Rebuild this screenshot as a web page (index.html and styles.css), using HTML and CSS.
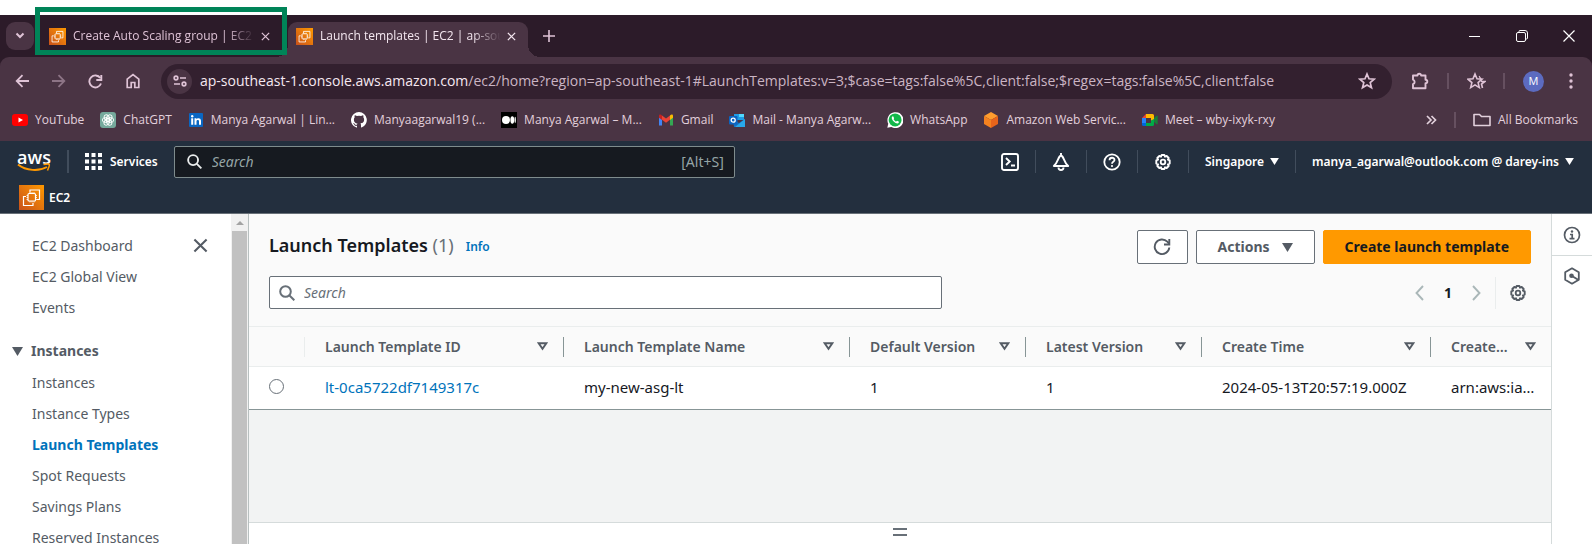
FILE: index.html
```html
<!DOCTYPE html>
<html lang="en">
<head>
<meta charset="utf-8">
<meta name="viewport" content="width=device-width, initial-scale=1">
<title>Launch templates | EC2 | ap-southeast-1</title>
<link rel="stylesheet" href="styles.css">
</head>
<body>
<svg class="sprite" aria-hidden="true">
  <defs>
    <linearGradient id="ec2-fill" x1="0" y1="1" x2="1" y2="0"><stop offset="0" stop-color="#c8511b"/><stop offset="1" stop-color="#ff9900"/></linearGradient>
    <symbol id="ec2" viewBox="0 0 25 25">
      <rect width="25" height="25" fill="url(#ec2-fill)"/>
      <g fill="none" stroke="#fff" stroke-width="1.2">
        <path d="M11 7.500V5h9.500v9.500H18M7 11.500H4.500V20.500H14V18"/>
        <rect x="9" y="8.500" width="7.500" height="7.500" rx="1"/>
        <path d="M11 8.500V7M13 8.500V7M15 8.500V7M11 17.500V16M13 17.500V16M15 17.500V16M9 10.500H7.500M9 12.500H7.500M9 14.500H7.500M18 10.500h-1.500M18 12.500h-1.500M18 14.500h-1.500" stroke-width=".8"/>
      </g>
    </symbol>
    <symbol id="close" viewBox="0 0 16 16"><path d="M1.500 1.500l13 13M14.500 1.500l-13 13" fill="none" stroke="currentColor" stroke-width="2.200"/></symbol>
    <symbol id="search" viewBox="0 0 16 16"><circle cx="6.500" cy="6.500" r="5.300" fill="none" stroke="currentColor" stroke-width="2"/><path d="M10.500 10.500l4.800 4.800" stroke="currentColor" stroke-width="2"/></symbol>
    <symbol id="caret" viewBox="0 0 10 8"><path d="M0 0h10L5 8z" fill="currentColor"/></symbol>
    <symbol id="sort" viewBox="0 0 10 8"><path d="M1.500 1h7L5 6z" fill="none" stroke="currentColor" stroke-width="1.800"/></symbol>
    <symbol id="gear" viewBox="0 0 18 18"><path d="M7.600 1.500h2.800l.6 1.700 1.700-.7 2 2-.8 1.700 1.800.7v3.200l-1.800.7.8 1.700-2 2-1.700-.7-.6 1.700H7.600L7 13.800l-1.700.7-2-2 .8-1.700-1.800-.7V6.900l1.800-.7-.8-1.700 2-2 1.700.7z" transform="translate(0 .5)" fill="none" stroke="currentColor" stroke-width="1.900" stroke-linejoin="round"/><circle cx="9" cy="9" r="2.300" fill="none" stroke="currentColor" stroke-width="1.800"/></symbol>
    <symbol id="star" viewBox="0 0 18 18"><path d="M9 2l2 4.800 5.200.4-4 3.400 1.300 5L9 12.900l-4.500 2.700 1.300-5-4-3.400 5.200-.4z" fill="none" stroke="currentColor" stroke-width="1.700" stroke-linejoin="miter"/></symbol>
  </defs>
</svg>

<header class="browser">
  <div class="tabstrip">
    <button class="tab-search" aria-label="Search tabs"><svg width="10" height="8" viewBox="0 0 10 8"><path d="M1.500 1.500L5 5l3.500-3.500" fill="none" stroke="currentColor" stroke-width="2"/></svg></button>
    <div class="tab">
      <svg class="favicon"><use href="#ec2"/></svg>
      <span class="tab-title">Create Auto Scaling group | EC2</span>
      <button class="tab-close" aria-label="Close tab"><svg width="9" height="9"><use href="#close"/></svg></button>
      <span class="tab-highlight"></span>
    </div>
    <div class="tab tab-active">
      <svg class="favicon"><use href="#ec2"/></svg>
      <span class="tab-title">Launch templates | EC2 | ap-sou</span>
      <button class="tab-close" aria-label="Close tab"><svg width="9" height="9"><use href="#close"/></svg></button>
    </div>
    <button class="new-tab" aria-label="New tab"><svg width="12" height="12" viewBox="0 0 12 12"><path d="M6 0v12M0 6h12" stroke="currentColor" stroke-width="1.600"/></svg></button>
    <div class="window-controls">
      <button aria-label="Minimize"><svg width="12" height="12" viewBox="0 0 12 12"><path d="M0 6.500h11" stroke="currentColor"/></svg></button>
      <button aria-label="Restore"><svg width="12" height="12" viewBox="0 0 12 12"><path d="M3 2V1.500Q3 .5 4 .5h5q2.500 0 2.500 2.500v5q0 1-1 1H10" fill="none" stroke="currentColor"/><rect x=".5" y="2.500" width="9" height="9" rx="1.500" fill="none" stroke="currentColor"/></svg></button>
      <button aria-label="Close"><svg width="12" height="12" viewBox="0 0 12 12"><path d="M.5.5l11 11M11.500.5l-11 11" stroke="currentColor" stroke-width="1.200"/></svg></button>
    </div>
  </div>

  <div class="chrome">
    <div class="toolbar">
      <div class="nav-buttons">
        <button aria-label="Back"><svg width="14" height="14" viewBox="0 0 14 14"><path d="M14 7H2M7.500 1.200L1.700 7l5.800 5.800" fill="none" stroke="currentColor" stroke-width="1.800"/></svg></button>
        <button class="dim" aria-label="Forward"><svg width="14" height="14" viewBox="0 0 14 14"><path d="M0 7h12M6.500 1.200L12.300 7l-5.800 5.800" fill="none" stroke="currentColor" stroke-width="1.800"/></svg></button>
        <button aria-label="Reload"><svg width="15" height="15" viewBox="0 0 15 15"><path d="M13 9.500A6 6 0 1 1 12.300 4" fill="none" stroke="currentColor" stroke-width="1.900"/><path d="M13.300 1v5H8.300" fill="none" stroke="currentColor" stroke-width="1.900"/></svg></button>
        <button aria-label="Home"><svg width="16" height="16" viewBox="0 0 16 16"><path d="M2.200 14.500V6.200L8 1.700l5.800 4.500v8.300H9.800V9.500H6.200v5z" fill="none" stroke="currentColor" stroke-width="1.700"/></svg></button>
      </div>
      <div class="omnibox">
        <button class="site-info" aria-label="Site information"><svg width="14" height="12" viewBox="0 0 14 12"><g fill="none" stroke="currentColor" stroke-width="1.700"><circle cx="3" cy="3" r="1.800"/><path d="M7 3h6M1 9h6"/><circle cx="11" cy="9" r="1.800"/></g></svg></button>
        <div class="url"><span class="url-host">ap-southeast-1.console.aws.amazon.com</span>/ec2/home?region=ap-southeast-1#LaunchTemplates:v=3;$case=tags:false%5C,client:false;$regex=tags:false%5C,client:false</div>
        <button class="bookmark-star" aria-label="Bookmark this tab"><svg width="18" height="18"><use href="#star"/></svg></button>
      </div>
      <div class="tools">
        <button aria-label="Extensions"><svg width="19" height="18" viewBox="0 0 19 18"><path d="M2 3.500h4.500a1.800 1.800 0 0 1 3.600 0h4.400v4.200a1.800 1.800 0 0 1 0 3.600v5H2v-4.200a2.300 2.300 0 0 0 0-4.400z" fill="none" stroke="currentColor" stroke-width="1.900" stroke-linejoin="round"/></svg></button>
        <span class="rule"></span>
        <button aria-label="Favourites"><svg width="19" height="18" viewBox="0 0 19 18"><path d="M8 2l2 4.800 5 .4-3.900 3.400 1.200 5L8 12.900l-4.300 2.700 1.200-5L1 7.200l5-.4z" fill="none" stroke="currentColor" stroke-width="1.600"/><path d="M12 5l1-.5M14 9.500h4l-3.500 2.500 1 4M13 5.500l1.500 3" fill="none" stroke="currentColor" stroke-width="1.600"/></svg></button>
        <span class="rule"></span>
        <button class="avatar" aria-label="Profile">M</button>
        <button aria-label="Menu"><svg width="4" height="16" viewBox="0 0 4 16" fill="currentColor"><circle cx="2" cy="2" r="1.700"/><circle cx="2" cy="8" r="1.700"/><circle cx="2" cy="14" r="1.700"/></svg></button>
      </div>
    </div>

    <nav class="bookmarks" aria-label="Bookmarks">
      <a href="#"><svg viewBox="0 0 16 16"><rect y="2" width="16" height="12" rx="3" fill="#f00"/><path d="M6.500 5.500v5L11 8z" fill="#fff"/></svg>YouTube</a>
      <a href="#"><svg viewBox="0 0 16 16"><rect width="16" height="16" rx="3" fill="#75a99c"/><g fill="none" stroke="#fff" stroke-width=".9"><ellipse cx="8" cy="5.800" rx="2.500" ry="3.500" transform="rotate(30 8 8)"/><ellipse cx="8" cy="5.800" rx="2.500" ry="3.500" transform="rotate(90 8 8)"/><ellipse cx="8" cy="5.800" rx="2.500" ry="3.500" transform="rotate(150 8 8)"/><ellipse cx="8" cy="5.800" rx="2.500" ry="3.500" transform="rotate(210 8 8)"/><ellipse cx="8" cy="5.800" rx="2.500" ry="3.500" transform="rotate(270 8 8)"/><ellipse cx="8" cy="5.800" rx="2.500" ry="3.500" transform="rotate(330 8 8)"/></g></svg>ChatGPT</a>
      <a href="#"><svg viewBox="0 0 16 16"><rect x="1" y="1" width="14" height="14" rx="1" fill="#0a66c2"/><path d="M3.200 6.300h2v6.500h-2zM6.500 6.300h1.900v.9c.9-1.600 4.600-1.600 4.600 1.500v4.100h-2V9.300c0-1.900-2.500-1.700-2.500 0v3.500h-2z" fill="#fff"/><circle cx="4.200" cy="4.200" r="1.200" fill="#fff"/></svg>Manya Agarwal | Lin...</a>
      <a href="#"><svg viewBox="0 0 16 16"><path fill="#fff" d="M8 0a8 8 0 0 0-2.500 15.600c.4.100.5-.2.500-.4v-1.400c-2.200.5-2.700-1-2.700-1-.4-.9-.9-1.200-.9-1.200-.7-.5.100-.5.100-.5.800.1 1.200.8 1.200.8.700 1.300 1.900.9 2.300.7.100-.5.300-.9.500-1.100-1.800-.2-3.600-.9-3.600-4 0-.9.300-1.600.8-2.200-.1-.2-.4-1 .1-2.100 0 0 .7-.2 2.200.8a7.500 7.500 0 0 1 4 0c1.500-1 2.200-.8 2.200-.8.400 1.100.2 1.900.1 2.100.5.600.8 1.300.8 2.200 0 3.100-1.900 3.700-3.700 3.900.3.300.6.800.6 1.500v2.200c0 .2.100.5.600.4A8 8 0 0 0 8 0z"/></svg>Manyaagarwal19 (...</a>
      <a href="#"><svg viewBox="0 0 16 16"><rect width="16" height="16" fill="#000"/><circle cx="5" cy="8" r="4" fill="#fff"/><ellipse cx="11.300" cy="8" rx="1.900" ry="3.700" fill="#fff"/><ellipse cx="14.200" cy="8" rx=".7" ry="3.200" fill="#fff"/></svg>Manya Agarwal – M...</a>
      <a href="#"><svg viewBox="0 0 16 16"><path d="M1 4v9.500h3V7z" fill="#4285f4"/><path d="M15 4v9.500h-3V7z" fill="#34a853"/><path d="M12 3.500V8l3-2.300V3.800c0-1.500-1.800-1.900-3-.3z" fill="#fbbc04"/><path d="M4 3.500v4.300l4 3 4-3V3.500l-4 3z" fill="#ea4335"/><path d="M1 3.800v1.900L4 8V3.500C2.800 1.900 1 2.300 1 3.800z" fill="#c5221f"/></svg>Gmail</a>
      <a href="#"><svg viewBox="0 0 16 16"><path d="M5 2h10v6H5z" fill="#1f9ce4"/><path d="M10 2h5v3h-5z" fill="#50d9ff"/><path d="M4 7l6 4 6-4v8H5z" fill="#1470c4"/><path d="M16 7v8H6z" fill="#28a8ea"/><rect y="4" width="8.500" height="8.500" rx="1" fill="#0b65c2"/><circle cx="4.200" cy="8.200" r="2" fill="none" stroke="#fff" stroke-width="1.300"/></svg>Mail - Manya Agarw...</a>
      <a href="#"><svg viewBox="0 0 16 16"><path d="M.3 15.800l1-4A8 8 0 1 1 4.300 15z" fill="#fff"/><circle cx="8.100" cy="7.900" r="6.500" fill="#12b84a"/><path d="M5.700 4.200c-1.700 1-.9 3.300 1 5.200s4.300 2.800 5.100 1.100c.4-.9-.1-1-1.700-1.800-.7.700-.9 1.200-2.100.2-1.300-1.100-1.700-1.700-.9-2.600-.5-1.300-.7-2.200-1.400-2.100z" fill="#fff"/></svg>WhatsApp</a>
      <a href="#"><svg viewBox="0 0 16 16"><path d="M8 0l7 4-7 4-7-4z" fill="#ff9d2e"/><path d="M1 4l7 4v8l-7-4z" fill="#f58220"/><path d="M15 4L8 8v8l7-4z" fill="#e8641b"/></svg>Amazon Web Servic...</a>
      <a href="#"><svg viewBox="0 0 16 16"><path d="M0 6l4-4v4z" fill="#ea4335"/><path d="M0 6h4v5H0z" fill="#2684fc"/><path d="M0 11h4v3H1.500Q0 14 0 12.500z" fill="#0066da"/><path d="M4 2h6.500Q12 2 12 3.500V8L9 9V6H4z" fill="#ffba00"/><path d="M4 14h6.500q1.500 0 1.500-1.500V7L9 8.500V11H4z" fill="#00ac47"/><path d="M12 6l3-2.500q.7 0 .7.700v7.500q0 .8-.7.800L12 10z" fill="#188038"/></svg>Meet – wby-ixyk-rxy</a>
      <div class="bookmarks-end">
        <button aria-label="More bookmarks"><svg width="11" height="10" viewBox="0 0 11 10"><path d="M1 1l4 4-4 4M5.500 1l4 4-4 4" fill="none" stroke="currentColor" stroke-width="1.700"/></svg></button>
        <span class="rule"></span>
        <a href="#"><svg class="folder" viewBox="0 0 18 14"><path d="M1 12.500v-11h5.500l2 2H17v9z" fill="none" stroke="currentColor" stroke-width="1.600" stroke-linejoin="round"/></svg>All Bookmarks</a>
      </div>
    </nav>
  </div>
</header>

<header class="aws-header">
  <div class="aws-row">
    <a class="aws-logo" href="#" aria-label="AWS home"><span>aws</span><svg width="34" height="9" viewBox="0 0 34 9"><path d="M1 1.500C9 8 22 8.500 30 4" fill="none" stroke="#f90" stroke-width="2"/><path d="M26.500 1.500q5-1 5.700 0t-1.700 6" fill="none" stroke="#f90" stroke-width="1.600"/></svg></a>
    <span class="aws-rule"></span>
    <button class="services"><svg width="17" height="17" viewBox="0 0 17 17" fill="currentColor"><path d="M0 0h4v4H0zM6.500 0h4v4h-4zM13 0h4v4h-4zM0 6.500h4v4H0zM6.500 6.500h4v4h-4zM13 6.500h4v4h-4zM0 13h4v4H0zM6.500 13h4v4h-4zM13 13h4v4h-4z"/></svg>Services</button>
    <label class="aws-search"><svg width="15" height="15"><use href="#search"/></svg><input type="search" placeholder="Search" aria-label="Search services"><span>[Alt+S]</span></label>
    <div class="aws-tools">
      <button aria-label="CloudShell"><svg width="18" height="18" viewBox="0 0 18 18"><rect x="1" y="1" width="16" height="16" rx="2" fill="none" stroke="currentColor" stroke-width="1.900"/><path d="M5 5l3.700 3.500L5 12M10 12.500h4" fill="none" stroke="currentColor" stroke-width="1.900"/></svg></button>
      <button aria-label="Notifications"><svg width="18" height="18" viewBox="0 0 18 18"><path d="M9 2.500C6 3 6.500 9 1.800 13h14.400C11.500 9 12 3 9 2.500zM9 0v3" fill="none" stroke="currentColor" stroke-width="1.900" stroke-linejoin="round"/><path d="M6.500 14.500a2.500 2.500 0 0 0 5 0" fill="none" stroke="currentColor" stroke-width="1.900"/></svg></button>
      <button aria-label="Help"><svg width="18" height="18" viewBox="0 0 18 18"><circle cx="9" cy="9" r="7.700" fill="none" stroke="currentColor" stroke-width="1.800"/><path d="M6.500 7.200c0-3.300 5-3.200 5-.2 0 2-2.500 1.700-2.500 3.800" fill="none" stroke="currentColor" stroke-width="1.800"/><circle cx="9" cy="13" r="1.100" fill="currentColor"/></svg></button>
      <button aria-label="Settings"><svg width="18" height="18"><use href="#gear"/></svg></button>
      <button class="region">Singapore <svg width="9" height="7"><use href="#caret"/></svg></button>
      <button class="account">manya_agarwal@outlook.com @ darey-ins <svg width="9" height="7"><use href="#caret"/></svg></button>
    </div>
  </div>
  <a class="favorite" href="#"><svg width="25" height="25"><use href="#ec2"/></svg>EC2</a>
</header>

<div class="console">
  <aside class="sidebar">
    <nav class="side-nav" aria-label="EC2">
      <div class="side-top"><a href="#">EC2 Dashboard</a><button aria-label="Close navigation"><svg width="15" height="15"><use href="#close"/></svg></button></div>
      <a href="#">EC2 Global View</a>
      <a href="#">Events</a>
      <button class="side-group" aria-expanded="true"><svg width="11" height="9"><use href="#caret"/></svg>Instances</button>
      <a href="#">Instances</a>
      <a href="#">Instance Types</a>
      <a class="current" href="#" aria-current="page">Launch Templates</a>
      <a href="#">Spot Requests</a>
      <a href="#">Savings Plans</a>
      <a href="#">Reserved Instances</a>
    </nav>
    <div class="scrollbar" aria-hidden="true"><svg width="8" height="4" viewBox="0 0 8 4"><path d="M0 4h8L4 0z" fill="#a3a3a3"/></svg><div class="thumb"></div></div>
  </aside>

  <main class="content">
    <section class="panel">
      <div class="panel-head">
        <div class="title-row">
          <h1>Launch Templates <span>(1)</span></h1>
          <a class="info" href="#">Info</a>
          <div class="actions">
            <button class="btn btn-icon" aria-label="Refresh"><svg width="18" height="18" viewBox="0 0 18 18"><path d="M16.300 9.500a7.300 7.300 0 1 1-2-5.800l1.700 1.800" fill="none" stroke="currentColor" stroke-width="1.900"/><path d="M16.300 1v5.500H11" fill="none" stroke="currentColor" stroke-width="1.900"/></svg></button>
            <button class="btn">Actions <svg width="11" height="9"><use href="#caret"/></svg></button>
            <button class="btn btn-primary">Create launch template</button>
          </div>
        </div>
        <div class="filter-row">
          <label class="filter"><svg width="16" height="16"><use href="#search"/></svg><input type="search" placeholder="Search" aria-label="Find launch templates"></label>
          <div class="pager">
            <button aria-label="Previous page"><svg width="9" height="16" viewBox="0 0 9 16"><path d="M8 1L1.500 8 8 15" fill="none" stroke="currentColor" stroke-width="1.900"/></svg></button>
            <button class="page">1</button>
            <button aria-label="Next page"><svg width="9" height="16" viewBox="0 0 9 16"><path d="M1 1l6.500 7L1 15" fill="none" stroke="currentColor" stroke-width="1.900"/></svg></button>
            <button class="prefs" aria-label="Preferences"><svg width="18" height="18"><use href="#gear"/></svg></button>
          </div>
        </div>
      </div>
      <table>
        <colgroup><col class="c-pick"><col class="c-id"><col class="c-name"><col class="c-ver"><col class="c-ver"><col class="c-time"><col></colgroup>
        <thead>
          <tr>
            <th aria-label="Selection"><div></div></th>
            <th><div>Launch Template ID<svg><use href="#sort"/></svg></div></th>
            <th><div>Launch Template Name<svg><use href="#sort"/></svg></div></th>
            <th><div>Default Version<svg><use href="#sort"/></svg></div></th>
            <th><div>Latest Version<svg><use href="#sort"/></svg></div></th>
            <th><div>Create Time<svg><use href="#sort"/></svg></div></th>
            <th><div>Create…<svg><use href="#sort"/></svg></div></th>
          </tr>
        </thead>
        <tbody>
          <tr>
            <td class="pick"><input type="radio" name="template" aria-label="my-new-asg-lt"></td>
            <td><a href="#">lt-0ca5722df7149317c</a></td>
            <td>my-new-asg-lt</td>
            <td>1</td>
            <td>1</td>
            <td>2024-05-13T20:57:19.000Z</td>
            <td>arn:aws:ia…</td>
          </tr>
        </tbody>
      </table>
    </section>
    <section class="split"><button aria-label="Resize panel"></button></section>
  </main>

  <aside class="rail">
    <button aria-label="Info panel"><svg width="18" height="18" viewBox="0 0 18 18"><circle cx="9" cy="9" r="7.500" fill="none" stroke="currentColor" stroke-width="1.700"/><circle cx="9" cy="5.500" r="1.200" fill="currentColor"/><path d="M7 8.500h2.200v4M6.500 12.700h5" fill="none" stroke="currentColor" stroke-width="1.700"/></svg></button>
    <button aria-label="Diagnostics"><svg width="18" height="18" viewBox="0 0 18 18"><path d="M9 1.300l6.800 3.900v7.600L9 16.700l-6.800-3.900V5.200z" fill="none" stroke="currentColor" stroke-width="1.800" stroke-linejoin="round"/><circle cx="8.500" cy="8.800" r="2.300" fill="currentColor"/><path d="M9 9l6.500 4" stroke="currentColor" stroke-width="2"/></svg></button>
  </aside>
</div>
</body>
</html>
```
FILE: styles.css
```css
:root {
  --chrome: #4a3444;
  --chrome-dark: #2c1b29;
  --pink: #dfc3d6;
  --navy: #232f3e;
  --grey: #545b64;
  --link: #0073bb;
}

* { box-sizing: border-box; }

body {
  margin: 0;
  height: 100vh;
  padding-top: 15px;
  display: flex;
  flex-direction: column;
  overflow: hidden;
  background: #fff;
  font: 14px/20px "Noto Sans", "Open Sans", sans-serif;
  color: #16191f;
}

button { border: 0; padding: 0; margin: 0; background: none; color: inherit; font: inherit; display: flex; align-items: center; justify-content: center; }
a { color: inherit; text-decoration: none; }
svg { display: block; flex: none; }
input { font: inherit; color: inherit; border: 0; outline: 0; padding: 0; margin: 0; background: none; min-width: 0; }
.sprite { position: absolute; width: 0; height: 0; }

/* Browser window */
.browser { background: var(--chrome-dark); color: var(--pink); font: 12px/16px "Open Sans", "Noto Sans", sans-serif; }
.tabstrip { display: flex; height: 42px; padding: 7px 0 0 6px; }
.tab-search { width: 28px; height: 28px; border-radius: 9px; background: var(--chrome); margin-right: 6px; }
.tab { position: relative; display: flex; align-items: center; width: 248px; height: 35px; padding: 0 18px 7px 9px; }
.tab-active { width: 240px; padding: 0 12px 7px 8px; background: var(--chrome); border-radius: 9px 9px 0 0; color: #f3e6ef; }
.tab-active::before, .tab-active::after { content: ""; position: absolute; bottom: 0; width: 12px; height: 12px; }
.tab-active::before { left: -12px; background: radial-gradient(circle at 0 0, transparent 12px, var(--chrome) 12px); }
.tab-active::after { right: -12px; background: radial-gradient(circle at 100% 0, transparent 12px, var(--chrome) 12px); }
.favicon { width: 17px; height: 17px; margin-right: 7px; }
.tab-title { flex: 1; overflow: hidden; white-space: nowrap; margin-right: 6px; mask-image: linear-gradient(to right, #000 84%, transparent); }
.tab-highlight { position: absolute; inset: -15px 1px 2px -5px; border: 5px solid #008458; pointer-events: none; z-index: 1; }
.new-tab { width: 42px; height: 28px; }
.window-controls { display: flex; margin-left: auto; color: #fff; }
.window-controls button { width: 47px; height: 28px; }

.chrome { background: var(--chrome); border-radius: 9px 9px 0 0; }
.toolbar { display: flex; align-items: center; height: 48px; padding: 0 13px 0 3px; }
.nav-buttons { display: flex; width: 158px; }
.nav-buttons button { width: 37px; height: 28px; }
.dim { opacity: .45; }
.omnibox { flex: 1; min-width: 0; display: flex; align-items: center; height: 35px; border-radius: 18px; background: #33202f; padding: 0 16px 0 6px; }
.site-info { width: 25px; height: 25px; border-radius: 50%; background: var(--chrome); flex: none; }
.url { flex: 1; min-width: 0; overflow: hidden; white-space: nowrap; margin: 0 16px 0 8px; font-size: 14px; line-height: 20px; color: #cbb5c4; }
.url-host { color: #f6e8f1; }
.tools { display: flex; align-items: center; }
.tools > button:first-child { margin-left: 19px; }
.rule { width: 2px; height: 16px; background: #665060; }
.tools .rule { margin: 0 18px 0 17px; }
.tools .avatar { width: 21px; height: 21px; border-radius: 50%; background: #5c6bc0; color: #fff; font-size: 11px; margin-right: 25px; }
.tools > button:last-child { margin-right: 6px; }

.bookmarks { display: flex; align-items: center; gap: 16px; height: 36px; padding: 0 14px 6px 12px; white-space: nowrap; color: #e2d0dc; }
.bookmarks a { display: flex; align-items: center; gap: 7px; }
.bookmarks a svg { width: 16px; height: 16px; }
.bookmarks-end { display: flex; align-items: center; gap: 17px; margin-left: auto; }
.bookmarks-end a .folder { width: 18px; height: 14px; }

/* AWS navigation */
.aws-header { flex: none; background: var(--navy); color: #fff; border-bottom: 1px solid #687078; font-size: 12px; font-weight: 600; }
.aws-row { display: flex; align-items: center; height: 41px; padding-right: 18px; }
.aws-logo { width: 34px; margin-left: 17px; display: flex; flex-direction: column; align-items: center; font: 600 18px/12px "Open Sans", sans-serif; }
.aws-rule { width: 2px; height: 23px; margin: 0 16px; background: #414d5c; }
.services { gap: 8px; }
.aws-search { flex: 0 1 561px; height: 32px; margin-left: 16px; padding: 0 10px 0 12px; display: flex; align-items: center; border: 1px solid #7f8c8d; border-radius: 2px; background: #161a20; color: #eaeded; font-size: 14px; font-weight: 400; }
.aws-search input { flex: 1; margin-left: 10px; }
.aws-search input::placeholder { color: #95a5a6; font-style: italic; opacity: 1; }
.aws-search span { color: #95a5a6; }
.aws-tools { display: flex; align-items: center; margin-left: auto; white-space: nowrap; }
.aws-tools button { height: 23px; padding: 0 16px; border-left: 1px solid #414d5c; gap: 6px; }
.aws-tools button:first-child { border-left: 0; }
.aws-tools .region { padding: 0 16px; }
.aws-tools .account { padding: 0 0 0 16px; }
.favorite { display: flex; align-items: center; width: max-content; gap: 5px; height: 31px; margin-left: 19px; }

/* Console */
.console { flex: 1; min-height: 0; display: flex; }
.sidebar { flex: none; width: 249px; display: flex; overflow: hidden; border-right: 1px solid #b8c0c0; color: var(--grey); }
.side-nav { flex: 1; padding: 16px 0 0 32px; }
.side-nav > a, .side-top { display: flex; align-items: center; height: 31px; white-space: nowrap; }
.side-top { justify-content: space-between; padding-right: 23px; }
.side-group { height: 32px; margin: 12px 0 0 -20px; gap: 8px; font-weight: 700; }
.side-nav > .current { color: var(--link); font-weight: 700; }
.scrollbar { width: 17px; background: #f1f1f1; display: flex; flex-direction: column; align-items: center; padding-top: 7px; }
.thumb { flex: 1; width: 15px; margin-top: 6px; background: #c1c1c1; }

.content { flex: 1; min-width: 0; display: flex; flex-direction: column; background: #f2f3f3; }
.panel { background: #fafafa; border-bottom: 1px solid #879596; }
.panel-head { padding: 16px 20px 17px 20px; }
.title-row { display: flex; align-items: center; height: 34px; }
h1 { margin: 0; font-size: 18px; line-height: 24px; font-weight: 600; padding-bottom: 4px; }
h1 span { font-weight: 400; color: #687078; }
.info { margin-left: 12px; font-size: 12px; font-weight: 600; color: var(--link); }
.actions { display: flex; gap: 8px; margin-left: auto; }
.btn { height: 34px; padding: 0 21px; gap: 12px; border: 1px solid #687078; border-radius: 2px; background: #fff; color: var(--grey); font-weight: 700; white-space: nowrap; }
.btn-icon { width: 51px; padding: 0; }
.btn-primary { background: #f90; border-color: #f90; color: #16191f; }
.filter-row { display: flex; align-items: center; margin-top: 12px; height: 33px; }
.filter { flex: 0 1 673px; height: 33px; display: flex; align-items: center; gap: 9px; padding: 0 9px; border: 1px solid #687078; border-radius: 2px; background: #fff; color: #687078; }
.filter input { flex: 1; }
.filter input::placeholder { color: #687078; font-style: italic; opacity: 1; }
.pager { display: flex; align-items: center; margin-left: auto; color: #aab7b8; }
.pager .page { width: 48px; color: #16191f; font-weight: 700; }
.pager .prefs { height: 32px; margin-left: 14px; padding: 0 4px 0 13px; border-left: 1px solid #eaeded; color: var(--grey); }

table { width: 100%; table-layout: fixed; border-collapse: collapse; white-space: nowrap; }
.c-pick { width: 56px; }
.c-id { width: 259px; }
.c-name { width: 286px; }
.c-ver { width: 176px; }
.c-time { width: 229px; }
th { height: 40px; padding: 0; border-top: 1px solid #eaeded; border-bottom: 1px solid #eaeded; text-align: left; color: var(--grey); font-weight: 600; }
th div { display: flex; align-items: center; justify-content: space-between; height: 20px; padding: 0 15px 0 20px; border-right: 1px solid #879596; }
th:first-child div { border-color: #eaeded; }
th:last-child div { border: 0; }
th svg { width: 11px; height: 9px; }
td { height: 42px; padding: 0 0 2px 20px; background: #fff; font-size: 15px; }
td a { color: var(--link); }
td input { appearance: none; display: block; width: 15px; height: 15px; border: 1px solid #687078; border-radius: 50%; background: #fff; }

.split { margin-top: auto; height: 22px; border-top: 1px solid #d5dbdb; background: #fff; display: flex; justify-content: center; padding-top: 5px; }
.split button { width: 14px; height: 8px; border: solid #687078; border-width: 2px 0; }

.rail { flex: none; width: 41px; border-left: 1px solid #d5dbdb; color: var(--grey); }
.rail button { width: 100%; height: 41px; }
.rail button + button { border-top: 1px solid #d5dbdb; }
```
